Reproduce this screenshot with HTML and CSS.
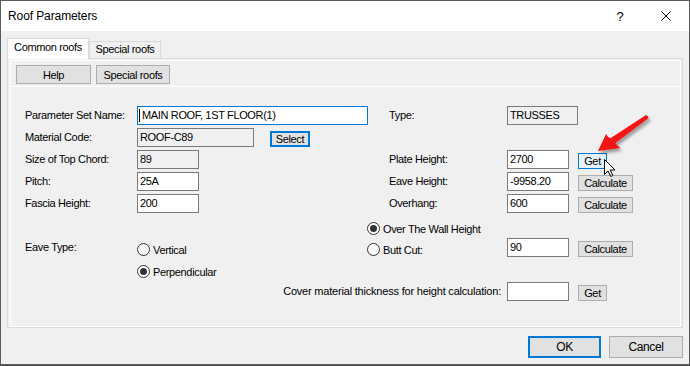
FILE: index.html
```html
<!DOCTYPE html>
<html>
<head>
<meta charset="utf-8">
<title>Roof Parameters</title>
<link rel="stylesheet" href="styles.css">
</head>
<body>
<div class="window">
  <div class="titlebar">
    <span class="title">Roof Parameters</span>
    <span class="capbtn">?</span>
    <span class="capbtn">
      <svg width="10" height="10" viewBox="0 0 10 10"><path d="M0.5 0.5 L9.5 9.5 M9.5 0.5 L0.5 9.5" stroke="#000" stroke-width="1" fill="none"/></svg>
    </span>
  </div>

  <div class="tabstrip">
    <div class="tab active">Common roofs</div>
    <div class="tab">Special roofs</div>
  </div>

  <div class="panel">
    <div class="inner">
      <div class="toolbar">
        <button class="btn tb-help">Help</button>
        <button class="btn tb-special">Special roofs</button>
      </div>

      <div class="form">
        <div class="lbl c1 r1">Parameter Set Name:</div>
        <div class="field focus w230 c2 r1"><span class="caret"></span>MAIN ROOF, 1ST FLOOR(1)</div>
        <div class="lbl c4 r1">Type:</div>
        <div class="field ro w70 c5 r1">TRUSSES</div>

        <div class="lbl c1 r2">Material Code:</div>
        <div class="pair c2 r2">
          <div class="field ro w117">ROOF-C89</div>
          <button class="btn sbtn select">Select</button>
        </div>

        <div class="lbl c1 r3">Size of Top Chord:</div>
        <div class="field ro w62 c2 r3">89</div>
        <div class="lbl c4 r3">Plate Height:</div>
        <div class="field w62 c5 r3">2700</div>
        <button class="btn sbtn hover w28 c6 r3">Get</button>

        <div class="lbl c1 r4">Pitch:</div>
        <div class="field w62 c2 r4">25A</div>
        <div class="lbl c4 r4">Eave Height:</div>
        <div class="field w62 c5 r4">-9958.20</div>
        <button class="btn sbtn w54 c6 r4">Calculate</button>

        <div class="lbl c1 r5">Fascia Height:</div>
        <div class="field w62 c2 r5">200</div>
        <div class="lbl c4 r5">Overhang:</div>
        <div class="field w62 c5 r5">600</div>
        <button class="btn sbtn w54 c6 r5">Calculate</button>

        <div class="radio first c3-5 r6"><span class="dot on"></span>Over The Wall Height</div>

        <div class="lbl c1 r7">Eave Type:</div>
        <div class="radio c2 r7"><span class="dot"></span>Vertical</div>
        <div class="radio c3-4 r7"><span class="dot"></span>Butt Cut:</div>
        <div class="field w62 c5 r7">90</div>
        <button class="btn sbtn w54 c6 r7">Calculate</button>

        <div class="radio c2 r8"><span class="dot on"></span>Perpendicular</div>

        <div class="lbl cover r9">Cover material thickness for height calculation:</div>
        <div class="field w62 c5 r9"></div>
        <button class="btn sbtn w28 c6 r9">Get</button>
      </div>
    </div>
  </div>

  <div class="footer">
    <button class="btn dlg default">OK</button>
    <button class="btn dlg">Cancel</button>
  </div>

  <svg class="overlay" width="690" height="366" viewBox="0 0 690 366">
    <defs>
      <filter id="sh" x="-20%" y="-20%" width="140%" height="140%">
        <feDropShadow dx="2" dy="3" stdDeviation="1.6" flood-color="#000" flood-opacity="0.35"/>
      </filter>
    </defs>
    <path filter="url(#sh)" fill="#f41414" d="M598 151 L606 134 Q608 137.5 610.4 138.2 L646 115 Q648.5 116 648.5 118.2 L615.4 143.1 Q617.5 146.5 620.5 148 Z"/>
    <path d="M604.5 159.5 V174.5 L608 171 L610.8 176.5 L612.8 175.5 L610.2 170 H615 Z" fill="#fff" stroke="#000" stroke-width="1" stroke-linejoin="miter"/>
  </svg>
</div>
</body>
</html>
```

FILE: styles.css
```css
* {
  box-sizing: border-box;
  margin: 0;
  padding: 0;
}

html, body {
  width: 690px;
  height: 366px;
  overflow: hidden;
}

body {
  background: #4a4a4a;
  font-family: "Liberation Sans", Arial, sans-serif;
  font-size: 11px;
  letter-spacing: -0.35px;
  color: #000;
}

.window {
  position: relative;
  width: 690px;
  height: 365px;
  border: 1px solid #5b5b5b;
  background: #f0f0f0;
  display: flex;
  flex-direction: column;
}

/* title bar */
.titlebar {
  height: 30px;
  flex-shrink: 0;
  background: #fff;
  display: flex;
  align-items: center;
}

.title {
  flex: 1;
  padding-left: 7px;
  font-size: 12px;
  letter-spacing: -0.1px;
  line-height: 30px;
}

.capbtn {
  width: 46px;
  height: 30px;
  display: flex;
  align-items: center;
  justify-content: center;
  font-size: 13px;
  letter-spacing: 0;
}

/* tabs */
.tabstrip {
  margin: 7px 0 0 6px;
  height: 20px;
  display: flex;
  align-items: flex-end;
  flex-shrink: 0;
}

.tab {
  width: 72px;
  height: 17px;
  border: 1px solid #d9d9d9;
  border-bottom: none;
  background: #f0f0f0;
  text-align: center;
  line-height: 15px;
  white-space: nowrap;
}

.tab.active {
  position: relative;
  z-index: 1;
  width: 82px;
  height: 21px;
  margin-bottom: -1px;
  padding-top: 1px;
  background: #fff;
}

.panel {
  margin-left: 6px;
  width: 676px;
  height: 270px;
  flex-shrink: 0;
  border: 1px solid #d9d9d9;
  padding: 1px 1px 0 2px;
  background: #f0f0f0;
}

.inner {
  height: 100%;
  border: 1px solid #fff;
}

.toolbar {
  display: flex;
  gap: 5px;
  padding: 4px 0 2px 5px;
  border-bottom: 1px solid #fff;
}

/* buttons */
.btn {
  font: inherit;
  letter-spacing: inherit;
  color: #000;
  background: #e1e1e1;
  border: 1px solid #adadad;
  display: flex;
  align-items: center;
  justify-content: center;
  white-space: nowrap;
}

.tb-help { width: 75px; height: 19px; }
.tb-special { width: 74px; height: 19px; }

.sbtn {
  height: 16px;
  margin-top: 3px;
  align-self: start;
}

.select {
  width: 40px;
  margin-left: 16px;
  border: 2px solid #0078d7;
}

.hover {
  border-color: #0078d7;
  background: #e5f1fb;
}

.w28 { width: 29px; }
.w54 { width: 55px; }

/* form grid */
.form {
  display: grid;
  grid-template-columns: 112px 230px 22px 118px 71px 54px;
  grid-template-rows: repeat(9, 22px);
  padding: 19px 0 0 14px;
}

.c1 { grid-column: 1; }
.c2 { grid-column: 2; }
.c4 { grid-column: 4; }
.c5 { grid-column: 5; }
.c6 { grid-column: 6; }
.c3-4 { grid-column: 3 / 5; }
.c3-5 { grid-column: 3 / 6; }
.cover {
  grid-column: 1 / 5;
  text-align: right;
  padding-right: 6px;
  letter-spacing: -0.2px;
}

.r1 { grid-row: 1; }
.r2 { grid-row: 2; }
.r3 { grid-row: 3; }
.r4 { grid-row: 4; }
.r5 { grid-row: 5; }
.r6 { grid-row: 6; }
.r7 { grid-row: 7; }
.r8 { grid-row: 8; }
.r9 { grid-row: 9; }

.lbl {
  line-height: 19px;
  white-space: nowrap;
  align-self: start;
}

.pair {
  display: flex;
  align-items: flex-start;
}

.field {
  height: 19px;
  align-self: start;
  border: 1px solid #7a7a7a;
  background: #fff;
  line-height: 17px;
  padding-left: 2px;
  white-space: nowrap;
  overflow: hidden;
}

.field.ro { background: #f0f0f0; }
.field.focus { border-color: #0078d7; padding-left: 1px; }

.w62 { width: 62px; }
.w70 { width: 71px; }
.w117 { width: 117px; }
.w230 { width: 231px; }

.caret {
  display: inline-block;
  width: 1px;
  height: 13px;
  background: #000;
  vertical-align: -3px;
  margin-right: 2px;
}

/* radios */
.radio {
  display: flex;
  align-items: center;
  gap: 3px;
  height: 19px;
  margin-top: 2px;
  align-self: start;
  white-space: nowrap;
}

.radio.first { margin-top: 3px; }

.dot {
  width: 13px;
  height: 13px;
  border: 1px solid #333;
  border-radius: 50%;
  background: #fff;
  display: flex;
  align-items: center;
  justify-content: center;
  flex-shrink: 0;
}

.dot.on::after {
  content: "";
  width: 7px;
  height: 7px;
  border-radius: 50%;
  background: #333;
}

/* footer */
.footer {
  display: flex;
  justify-content: flex-end;
  gap: 8px;
  padding: 8px 6px 0 0;
}

.dlg {
  width: 74px;
  height: 22px;
  font-size: 12px;
  letter-spacing: -0.4px;
}

.default {
  width: 73px;
  border: 2px solid #0078d7;
}

/* annotation overlay */
.overlay {
  position: absolute;
  left: -1px;
  top: -1px;
  pointer-events: none;
}
```
